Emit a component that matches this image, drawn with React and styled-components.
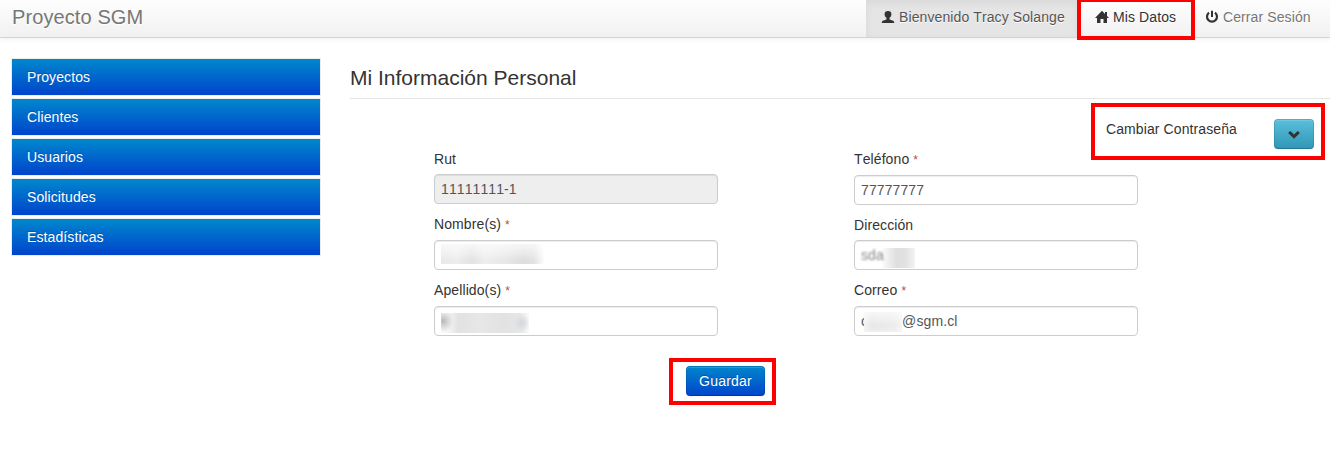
import React from 'react';
import styled, { createGlobalStyle, css } from 'styled-components';

const GlobalStyle = createGlobalStyle`
  * { box-sizing: border-box; }
  body {
    margin: 0;
    background: #fff;
    color: #333;
    font: 14px/20px "Liberation Sans", Arial, sans-serif;
    font-kerning: none;
    letter-spacing: 0.1px;
    overflow: hidden;
  }
`;

const Page = styled.div`
  height: 450px;
  overflow: hidden;
`;

const Navbar = styled.header`
  display: flex;
  justify-content: space-between;
  height: 38px;
  padding: 0 4px 0 12px;
  background: linear-gradient(#fefefe, #f1f1f1);
  border-bottom: 1px solid #d4d4d4;
  box-shadow: 0 1px 6px rgba(0, 0, 0, 0.07);
`;

const Brand = styled.div`
  padding-top: 7px;
  font-size: 20px;
  color: #777;
  text-shadow: 0 1px 0 #fff;
`;

const Nav = styled.nav`
  display: flex;
`;

const NavItem = styled.a`
  position: relative;
  display: flex;
  gap: 4px;
  width: ${(p) => p.$width}px;
  padding: 7px 0 0 ${(p) => p.$indent || 15}px;
  color: ${(p) => p.$color || '#777'};
  text-shadow: 0 1px 0 #fff;
  white-space: nowrap;
  ${(p) =>
    p.$active &&
    css`
      background: #e5e5e5;
      box-shadow: inset 0 3px 8px rgba(0, 0, 0, 0.06);
    `}
`;

const Icon = styled.svg`
  width: 14px;
  height: 14px;
  margin-top: 3px;
  flex: none;
  fill: #333;
`;

const Highlight = styled.span`
  position: absolute;
  top: ${(p) => p.$top}px;
  left: ${(p) => p.$left}px;
  width: ${(p) => p.$width}px;
  height: ${(p) => p.$height}px;
  border: 4px solid #f00;
  pointer-events: none;
  z-index: 2;
`;

const Layout = styled.div`
  display: grid;
  grid-template-columns: 308px 980px;
  column-gap: 30px;
  padding: 21px 0 0 12px;
`;

const Sidebar = styled.aside`
  display: flex;
  flex-direction: column;
  gap: 4px;
`;

const MenuItem = styled.a`
  height: 36px;
  padding: 8px 15px;
  color: #fff;
  background: linear-gradient(#0088cc, #0044cc);
  box-shadow: 0 0 0 1px rgba(0, 0, 0, 0.08);
  text-shadow: 0 -1px 0 rgba(0, 0, 0, 0.2);
`;

const Main = styled.main`
  display: flex;
  flex-direction: column;
`;

const Title = styled.h1`
  height: 40px;
  margin: 0;
  padding-top: 9px;
  border-bottom: 1px solid #e5e5e5;
  font-size: 21px;
  line-height: 20px;
  font-weight: 400;
  letter-spacing: 0;
`;

const PasswordRow = styled.div`
  position: relative;
  display: flex;
  justify-content: space-between;
  align-self: flex-end;
  width: 208px;
  height: 30px;
  margin: 20px 16px 0 0;
`;

const buttonBase = css`
  height: 30px;
  padding: 0;
  border: 1px solid rgba(0, 0, 0, 0.1);
  border-bottom-color: rgba(0, 0, 0, 0.2);
  border-radius: 4px;
  background-origin: border-box;
  box-shadow: inset 0 1px 0 rgba(255, 255, 255, 0.15), 0 1px 2px rgba(0, 0, 0, 0.05);
  font: inherit;
  font-kerning: none;
  color: #fff;
  text-shadow: 0 -1px 0 rgba(0, 0, 0, 0.25);
`;

const InfoButton = styled.button`
  ${buttonBase}
  display: flex;
  justify-content: center;
  width: 40px;
  padding-top: 4px;
  background-image: linear-gradient(#5bc0de, #2f96b4);
`;

const SaveButton = styled.button`
  ${buttonBase}
  width: 79px;
  letter-spacing: 0.2px;
  background-image: linear-gradient(#0088cc, #0044cc);
`;

const FormGrid = styled.form`
  display: grid;
  grid-template-columns: 284px 284px;
  column-gap: 136px;
  padding-left: 84px;
`;

const Column = styled.div`
  display: flex;
  flex-direction: column;
`;

const Field = styled.div`
  margin-bottom: 10px;
`;

const Label = styled.label`
  display: block;
  margin-bottom: ${(p) => p.$gap || 5}px;
`;

const Required = styled.span`
  color: #b94a48;
  font-size: 12px;
  line-height: 1;
`;

const InputBox = styled.div`
  display: flex;
  height: 30px;
  padding: 4px 6px;
  border: 1px solid #ccc;
  border-radius: 4px;
  background: ${(p) => (p.$disabled ? '#eee' : '#fff')};
  box-shadow: inset 0 1px 1px rgba(0, 0, 0, 0.075);
  color: #555;
`;

const Smudge = styled.span`
  width: ${(p) => p.$width}px;
  height: 20px;
  margin-top: ${(p) => p.$drop || 0}px;
  margin-left: ${(p) => p.$shift || 0}px;
  background: ${(p) => p.$fill};
`;

const Faded = styled.span`
  color: #888;
  filter: blur(1.3px);
`;

const Actions = styled.div`
  position: relative;
  align-self: flex-start;
  height: 30px;
  margin: 20px 0 0 336px;
`;

const Star = () => <Required>*</Required>;

const menu = ['Proyectos', 'Clientes', 'Usuarios', 'Solicitudes', 'Estadísticas'];

export default function App() {
  return (
    <Page>
      <GlobalStyle />
      <Navbar>
        <Brand>Proyecto SGM</Brand>
        <Nav>
          <NavItem $active $width={212} $color="#555">
            <Icon viewBox="0 0 14 14">
              <path d="M7 1C4.700 1 3.500 2.200 3.600 4.200c.1 1.700.8 3 1.900 3.800v1c0 .4-.3.6-.9.8L2 10.700c-.8.3-1.200.8-1.200 2.300h12.400c0-1.500-.4-2-1.200-2.300L9.400 9.800c-.6-.2-.9-.4-.9-.8V8c1.100-.8 1.800-2.100 1.900-3.800C10.500 2.200 9.300 1 7 1Z" />
            </Icon>
            Bienvenido Tracy Solange
          </NavItem>
          <NavItem $width={112} $indent={17} $color="#333">
            <Icon viewBox="0 0 14 14">
              <path d="M7 .8 0 8h2v5h3.500V9h3v4H12V8h2l-2-2.100V2h-2v1.900Z" />
            </Icon>
            Mis Datos
            <Highlight $top={-2} $left={-1} $width={118} $height={42} />
          </NavItem>
          <NavItem $width={136}>
            <Icon viewBox="0 0 14 14">
              <path d="M6 .8h2v6.200H6Z" />
              <path
                d="M4 2.700A5 5 0 1 0 10 2.700"
                fill="none"
                stroke="#333"
                strokeWidth="2.200"
              />
            </Icon>
            Cerrar Sesión
          </NavItem>
        </Nav>
      </Navbar>
      <Layout>
        <Sidebar>
          {menu.map((name) => (
            <MenuItem key={name}>{name}</MenuItem>
          ))}
        </Sidebar>
        <Main>
          <Title>Mi Información Personal</Title>
          <PasswordRow>
            <span>Cambiar Contraseña</span>
            <InfoButton type="button" aria-label="Cambiar Contraseña">
              <Icon viewBox="0 0 14 14">
                <path d="m3.300 3.900 3.700 3.500 3.700-3.500 2.200 2.200L7 11.700 1.100 6.100Z" />
              </Icon>
            </InfoButton>
            <Highlight $top={-16} $left={-15} $width={234} $height={57} />
          </PasswordRow>
          <FormGrid>
            <Column>
              <Field>
                <Label>Rut</Label>
                <InputBox $disabled>11111111-1</InputBox>
              </Field>
              <Field>
                <Label $gap={6}>Nombre(s) <Star /></Label>
                <InputBox>
                  <Smudge
                    $width={104}
                    $drop={-1}
                    $fill="linear-gradient(rgba(255,255,255,.75), rgba(255,255,255,.4) 50%, rgba(255,255,255,.1) 80%), linear-gradient(90deg, #e6e6e6, #ebebeb 15%, #dfdfdf 30%, #ececec 42%, #e5e5e5 60%, #dadada 80%, #e0e0e0 90%, #fff)"
                  />
                </InputBox>
              </Field>
              <Field>
                <Label $gap={6}>Apellido(s) <Star /></Label>
                <InputBox>
                  <Smudge
                    $width={88}
                    $drop={2}
                    $fill="radial-gradient(8px 9px at 81px 10px, #d3d6db, transparent), radial-gradient(10px 11px at 2px 8px, #bcb7b5, transparent), linear-gradient(90deg, #fbfbfb, #f4f4f4 8%, #e2e2e2 20%, #e7e7e7 45%, #e2e2e2 70%, #e6e6e6 90%, #fafafa)"
                  />
                </InputBox>
              </Field>
            </Column>
            <Column>
              <Field>
                <Label $gap={6}>Teléfono <Star /></Label>
                <InputBox>77777777</InputBox>
              </Field>
              <Field>
                <Label>Dirección</Label>
                <InputBox>
                  <Faded>sda</Faded>
                  <Smudge
                    $width={33}
                    $drop={3}
                    $shift={-2}
                    $fill="linear-gradient(90deg, rgba(222,222,222,.1), #dedede 45%, #e1e1e1 70%, #f3f3f3)"
                  />
                </InputBox>
              </Field>
              <Field>
                <Label $gap={6}>Correo <Star /></Label>
                <InputBox>
                  <span>c</span>
                  <Smudge
                    $width={38}
                    $drop={1}
                    $shift={-4}
                    $fill="linear-gradient(90deg, #fff8, transparent 20%, rgba(255,255,255,.2) 80%, #fff8), linear-gradient(#f7f7f7, #e7e7e7 70%, #eee)"
                  />
                  @sgm.cl
                </InputBox>
              </Field>
            </Column>
          </FormGrid>
          <Actions>
            <SaveButton type="button">Guardar</SaveButton>
            <Highlight $top={-8} $left={-17} $width={107} $height={47} />
          </Actions>
        </Main>
      </Layout>
    </Page>
  );
}
